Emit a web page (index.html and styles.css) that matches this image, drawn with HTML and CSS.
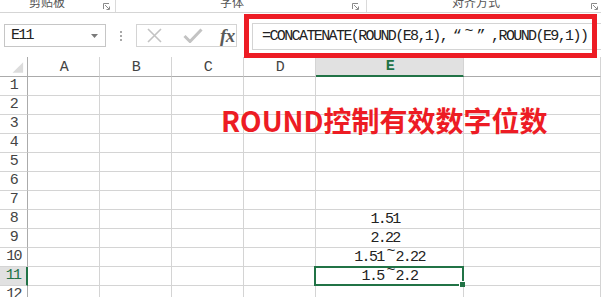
FILE: index.html
```html
<!DOCTYPE html>
<html>
<head>
<meta charset="utf-8">
<link rel="stylesheet" href="styles.css">
</head>
<body>
<div class="app">
  <div class="ribbon">
    <div class="grp g1"><span class="glabel">剪贴板</span><svg class="launch" width="7" height="7" viewBox="0 0 7 7"><path d="M0.5 6V0.5H6" fill="none" stroke="#8a8a8a"/><path d="M2 2L6 6M3.5 6.5H6.5V3.5" fill="none" stroke="#8a8a8a"/></svg></div>
    <div class="grp g2"><span class="glabel">字体</span><svg class="launch" width="7" height="7" viewBox="0 0 7 7"><path d="M0.5 6V0.5H6" fill="none" stroke="#8a8a8a"/><path d="M2 2L6 6M3.5 6.5H6.5V3.5" fill="none" stroke="#8a8a8a"/></svg></div>
    <div class="grp g3"><span class="glabel">对齐方式</span><svg class="launch" width="7" height="7" viewBox="0 0 7 7"><path d="M0.5 6V0.5H6" fill="none" stroke="#8a8a8a"/><path d="M2 2L6 6M3.5 6.5H6.5V3.5" fill="none" stroke="#8a8a8a"/></svg></div>
  </div>

  <div class="fbar">
    <div class="namebox"><span class="nbtext">E11</span><svg class="tri" width="7" height="4" viewBox="0 0 7 4"><path d="M0 0H7L3.5 4Z" fill="#7a7a7a"/></svg></div>
    <div class="grip"><i></i><i></i><i></i></div>
    <div class="btns">
      <svg class="ico-x" width="15" height="15" viewBox="0 0 15 15"><path d="M1 1L14 14M14 1L1 14" stroke="#c3c3c3" stroke-width="1.6" fill="none"/></svg>
      <svg class="ico-ok" width="20" height="15" viewBox="0 0 20 15"><path d="M1.5 8L7 13.5L18.5 1.5" stroke="#c3c3c3" stroke-width="3" fill="none"/></svg>
      <span class="fx">fx</span>
    </div>
    <div class="finput"><span class="ftext">=CONCATENATE(ROUND(E8,1),<span class="fw ql">“</span><span class="fw tl">~</span><span class="fw qr">”</span>,ROUND(E9,1))</span></div>
    <div class="redbox"></div>
  </div>

  <div class="sheet">
    <div class="c hd corner"><svg width="28" height="20" viewBox="0 0 28 20"><path d="M24 5V16H13Z" fill="#dcdcdc"/></svg></div>
    <div class="c hd">A</div><div class="c hd">B</div><div class="c hd">C</div><div class="c hd">D</div><div class="c hd hsel">E</div><div class="c hd"></div>

    <div class="c rh">1</div><div class="c"></div><div class="c"></div><div class="c"></div><div class="c"></div><div class="c"></div><div class="c"></div>
    <div class="c rh">2</div><div class="c"></div><div class="c"></div><div class="c"></div><div class="c"></div><div class="c"></div><div class="c"></div>
    <div class="c rh">3</div><div class="c"></div><div class="c"></div><div class="c"></div><div class="c"></div><div class="c"></div><div class="c"></div>
    <div class="c rh">4</div><div class="c"></div><div class="c"></div><div class="c"></div><div class="c"></div><div class="c"></div><div class="c"></div>
    <div class="c rh">5</div><div class="c"></div><div class="c"></div><div class="c"></div><div class="c"></div><div class="c"></div><div class="c"></div>
    <div class="c rh">6</div><div class="c"></div><div class="c"></div><div class="c"></div><div class="c"></div><div class="c"></div><div class="c"></div>
    <div class="c rh">7</div><div class="c"></div><div class="c"></div><div class="c"></div><div class="c"></div><div class="c"></div><div class="c"></div>
    <div class="c rh">8</div><div class="c"></div><div class="c"></div><div class="c"></div><div class="c"></div><div class="c val num"><span class="vt">1.51</span></div><div class="c"></div>
    <div class="c rh">9</div><div class="c"></div><div class="c"></div><div class="c"></div><div class="c"></div><div class="c val num"><span class="vt">2.22</span></div><div class="c"></div>
    <div class="c rh">10</div><div class="c"></div><div class="c"></div><div class="c"></div><div class="c"></div><div class="c val"><span class="vt">1.51<span class="fw tr">~</span>2.22</span></div><div class="c"></div>
    <div class="c rh rsel">11</div><div class="c"></div><div class="c"></div><div class="c"></div><div class="c"></div><div class="c val sel"><span class="vt">1.5<span class="fw tr">~</span>2.2</span><span class="handle"></span></div><div class="c"></div>
    <div class="c rh">12</div><div class="c"></div><div class="c"></div><div class="c"></div><div class="c"></div><div class="c"></div><div class="c"></div>
  </div>

  <div class="title">ROUND控制有效数字位数</div>
</div>
</body>
</html>
```

FILE: styles.css
```css
html, body {
  margin: 0;
  padding: 0;
  background: #fff;
}
.app {
  position: relative;
  width: 601px;
  height: 297px;
  overflow: hidden;
  background: #fff;
  font-family: "Liberation Mono", monospace;
}

/* ribbon group labels */
.ribbon {
  display: flex;
  height: 12px;
  border-bottom: 1px solid #d5d5d5;
  overflow: hidden;
}
.grp {
  display: flex;
  align-items: flex-start;
  height: 12px;
  border-right: 1px solid #dadada;
  box-sizing: content-box;
}
.g1 { width: 115px; }
.g2 { width: 250px; }
.g3 { flex: 1; border-right: none; }
.glabel {
  font-family: "Noto Sans CJK SC", sans-serif;
  font-size: 12px;
  line-height: 12px;
  color: #555;
  margin-top: -4px;
  white-space: nowrap;
}
.g1 .glabel { margin-left: 29px; }
.g2 .glabel { margin-left: 104px; }
.g3 .glabel { margin-left: 85px; }
.launch {
  margin-left: auto;
  margin-top: 3px;
}
.g1 .launch { margin-right: 5px; }
.g2 .launch { margin-right: 7px; }
.g3 .launch { margin-right: 3px; }

/* formula bar */
.fbar {
  position: relative;
  display: flex;
  align-items: flex-start;
  height: 44px;
}
.namebox {
  box-sizing: border-box;
  margin-left: 4px;
  margin-top: 11px;
  width: 102px;
  height: 23px;
  border: 1px solid #c6c6c6;
  display: flex;
  align-items: center;
  padding-left: 6px;
}
.nbtext {
  font-size: 15px;
  letter-spacing: -1.7px;
  color: #222;
}
.tri { margin-left: auto; margin-right: 7px; }
.grip {
  margin-left: 14px;
  margin-top: 18px;
  width: 2px;
  display: flex;
  flex-direction: column;
  gap: 2px;
}
.grip i {
  display: block;
  width: 2px;
  height: 2px;
  background: #a8a8a8;
}
.btns {
  box-sizing: border-box;
  margin-left: 14px;
  margin-top: 11px;
  width: 101px;
  height: 23px;
  border: 1px solid #d4d4d4;
  display: flex;
  align-items: center;
  padding-left: 10px;
}
.ico-ok { margin-left: 21px; }
.fx {
  margin-left: 17px;
  font-family: "Liberation Serif", serif;
  font-style: italic;
  font-weight: bold;
  font-size: 19px;
  color: #5a5a5a;
  letter-spacing: -0.5px;
  line-height: 20px;
}
.finput {
  box-sizing: border-box;
  flex: 1;
  margin-left: 15px;
  margin-top: 10px;
  height: 27px;
  border: 1px solid #d4d4d4;
  border-right: none;
  padding-left: 9px;
  display: flex;
  align-items: center;
}
.ftext {
  font-size: 15px;
  letter-spacing: -1.6px;
  color: #222;
  white-space: nowrap;
}
.fw {
  display: inline-block;
  width: 14.7px;
  letter-spacing: 0;
}
.ql { text-align: right; }
.qr { text-align: left; }
.tl { text-align: center; vertical-align: 5px; line-height: 8px; }
.tr { width: 12px; text-align: right; vertical-align: 6px; line-height: 8px; }
.redbox {
  position: absolute;
  left: 244px;
  top: 1px;
  width: 353px;
  height: 44px;
  box-sizing: border-box;
  border: 5px solid #ed1c24;
  z-index: 5;
}

/* sheet */
.sheet {
  display: grid;
  grid-template-columns: 28px 72px 72px 72px 72px 148px 1fr;
  grid-template-rows: 20px repeat(12, 19px);
}
.c {
  box-sizing: border-box;
  border-right: 1px solid #d4d4d4;
  border-bottom: 1px solid #d4d4d4;
  font-size: 15px;
  letter-spacing: -1.7px;
  color: #222;
  display: flex;
  align-items: center;
  justify-content: center;
  white-space: nowrap;
  line-height: 18px;
}
.hd {
  border-bottom-color: #ababab;
  color: #444;
  padding-top: 2px;
}
.corner {
  border-right-color: #ababab;
  padding: 0;
}
.corner svg { display: block; }
.hsel {
  background: #e1e1e1;
  border-bottom: 2px solid #217346;
  color: #217346;
  font-weight: bold;
}
.rh {
  border-right-color: #ababab;
  color: #444;
}
.rsel {
  background: #e1e1e1;
  border-right: 2px solid #217346;
  color: #217346;
}
.num { padding-right: 9px; }
.val { padding-top: 1px; }
.vt { display: block; }
.sel { position: relative; }
.sel::after {
  content: "";
  position: absolute;
  top: -1px;
  left: -2px;
  right: -1px;
  bottom: -1px;
  border: 2px solid #217346;
}
.handle {
  position: absolute;
  right: -2px;
  bottom: -2px;
  width: 6px;
  height: 6px;
  box-sizing: border-box;
  background: #217346;
  border-left: 1px solid #fff;
  border-top: 1px solid #fff;
  z-index: 2;
}

.title {
  position: absolute;
  left: 221px;
  top: 106px;
  font-family: "Noto Sans CJK SC", sans-serif;
  font-weight: bold;
  font-size: 28px;
  line-height: 28px;
  color: #ed1c24;
  white-space: nowrap;
}
```
